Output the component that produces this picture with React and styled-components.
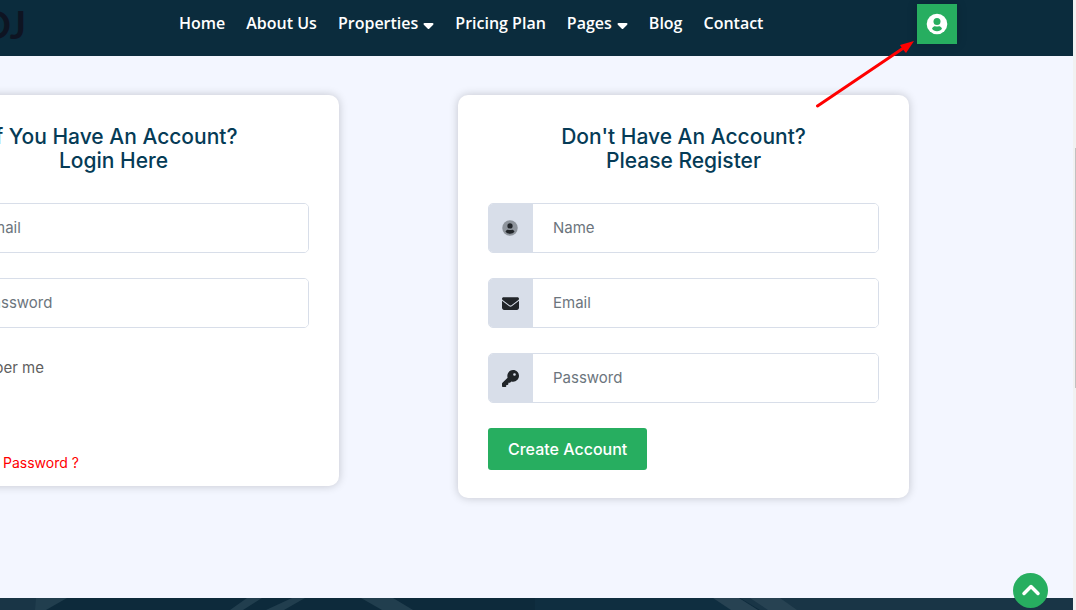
import React from "react";
import styled, { createGlobalStyle } from "styled-components";
import { FaEnvelope, FaKey, FaCaretDown } from "react-icons/fa6";

const GlobalStyle = createGlobalStyle`
  *, *::before, *::after { box-sizing: border-box; }
  body {
    margin: 0;
    background: #f3f6ff;
    font-family: Inter, "Liberation Sans", sans-serif;
    font-size: 15px;
    color: #606060;
    overflow: hidden;
  }
  button, input { font: inherit; }
  a { text-decoration: none; }
`;

const Shell = styled.div`
  display: flex;
  min-height: 100vh;
  overflow: hidden;
`;

const Page = styled.div`
  position: relative;
  flex: 1;
  min-width: 0;
  display: flex;
  flex-direction: column;
`;

const ScrollTrack = styled.div`
  flex: none;
  width: 3px;
  padding: 148px 0 0 2px;
  background: #f1f1f1;
`;

const ScrollThumb = styled.div`
  height: 240px;
  background: #c1c1c1;
`;

const Header = styled.header`
  display: flex;
  align-items: flex-start;
  height: 56px;
  padding-right: 116px;
  background: #0b2c3d;
`;

const Logo = styled.a`
  display: flex;
  flex: none;
  justify-content: flex-end;
  width: 26px;
  margin-right: 153px;
  font-family: Lato, sans-serif;
  font-size: 38px;
  font-weight: 700;
  line-height: 48px;
  color: #0e1422;
`;

const Nav = styled.nav`
  display: flex;
  flex: 1;
  gap: 21px;
`;

const NavLink = styled.a`
  display: flex;
  align-items: center;
  gap: 5px;
  font-family: "Open Sans", sans-serif;
  font-size: 16px;
  font-weight: 600;
  line-height: 46px;
  white-space: nowrap;
  color: #fff;

  svg {
    width: 11px;
    height: 16px;
    margin-top: 4px;
  }
`;

const AccountButton = styled.button`
  display: grid;
  place-items: center;
  flex: none;
  width: 40px;
  height: 40px;
  margin-top: 4px;
  padding: 0 1px 1px 0;
  border: 0;
  background: #27ae60;
  box-shadow: 0 0 10px rgba(0, 0, 0, 0.15);
  color: #fff;
`;

const Main = styled.main`
  flex: 1;
  display: grid;
  grid-template-columns: 1fr 1fr;
  gap: 119px;
  align-items: start;
  margin-left: -112px;
  padding: 39px 164px 100px 0;
`;

const Card = styled.section`
  padding: 30px 30px ${(p) => (p.$compact ? "11px" : "28px")};
  border-radius: 10px;
  background: #fff;
  box-shadow: 0 0 10px rgba(0, 0, 0, 0.2);
`;

const Title = styled.h2`
  margin: 0 0 30px;
  font-size: 21px;
  font-weight: 500;
  line-height: 24px;
  text-align: center;
  color: #053b56;
`;

const Form = styled.form`
  display: flex;
  flex-direction: column;
  align-items: flex-start;
  gap: 25px;
`;

const Field = styled.label`
  display: flex;
  align-self: stretch;
  height: 50px;
  border: 1px solid #d8dee9;
  border-radius: 5px;
  overflow: hidden;
`;

const FieldIcon = styled.span`
  display: grid;
  place-items: center;
  flex: none;
  width: 44px;
  padding-right: 2px;
  background: #d8dee9;
  color: #212529;
`;

const Input = styled.input`
  flex: 1;
  min-width: 0;
  padding: 0 20px 1px;
  border: 0;
  outline: 0;
  background: #fff;
  color: #212529;

  &::placeholder {
    color: #6c757d;
    opacity: 1;
  }
`;

const Remember = styled.label`
  display: flex;
  align-items: center;
  gap: 10px;
  height: 28px;

  input { width: 13px; height: 13px; margin: 0; }
`;

const SubmitButton = styled.button`
  height: 42px;
  padding: 0 20px;
  border: 0;
  border-radius: 3px;
  background: #27ae60;
  font-size: 16px;
  font-weight: 500;
  color: #fff;
`;

const LoginActions = styled.div`
  display: flex;
  flex-direction: column;
  align-items: flex-start;
  gap: 20px;
  margin-top: -17px;
`;

const ForgotLink = styled.a`
  padding-left: 4px;
  font-size: 14px;
  line-height: 24px;
  color: #f00;
`;

const Footer = styled.footer`
  height: 12px;
  background: #0d2a3b;

  svg { display: block; width: 100%; height: 12px; }
`;

const TopButton = styled.button`
  position: fixed;
  right: 28px;
  bottom: 2px;
  display: grid;
  place-items: center;
  width: 35px;
  height: 35px;
  padding: 0 0 2px;
  border: 0;
  border-radius: 50%;
  background: #27ae60;
`;

const Pointer = styled.svg`
  position: absolute;
  top: 38px;
  right: 157px;
  width: 100px;
  height: 72px;
  pointer-events: none;
`;

const NAV = [
  { label: "Home" },
  { label: "About Us" },
  { label: "Properties", menu: true },
  { label: "Pricing Plan" },
  { label: "Pages", menu: true },
  { label: "Blog" },
  { label: "Contact" },
];

const AccountIcon = () => (
  <svg width="24" height="24" viewBox="0 0 24 24" fill="currentColor" aria-hidden="true">
    <circle cx="12" cy="12" r="10.3" />
    <ellipse cx="12" cy="9.6" rx="3.5" ry="3.5" fill="#27ae60" />
    <path d="M7 16.400c.9-1.600 2.600-2.200 3.700-2 .9.200 1.700.2 2.600 0 1.100-.2 2.800.4 3.700 2-.9 1.700-2.700 2.800-5 2.800s-4.100-1.100-5-2.800z" fill="#27ae60" />
  </svg>
);

const PersonIcon = () => (
  <svg width="18" height="18" viewBox="0 0 24 24" aria-hidden="true">
    <circle cx="12" cy="12" r="10.300" fill="#212529" opacity="0.4" />
    <circle cx="12" cy="9.200" r="3.500" fill="#212529" />
    <path d="M6 16.800c.9-1.900 2.700-2.700 4-2.300 1.300.4 2.700.4 4 0 1.300-.4 3.100.4 4 2.300-1.300 1.900-3.500 3-6 3s-4.700-1.100-6-3z" fill="#212529" />
  </svg>
);

const FormField = ({ icon, label, type = "text" }) => (
  <Field>
    <FieldIcon>{icon}</FieldIcon>
    <Input type={type} placeholder={label} aria-label={label} />
  </Field>
);

export default function App() {
  return (
    <>
      <GlobalStyle />
      <Shell>
        <Page>
          <Header>
            <Logo href="#">OJ</Logo>
            <Nav>
              {NAV.map(({ label, menu }) => (
                <NavLink key={label} href="#">
                  {label}
                  {menu && <FaCaretDown aria-hidden="true" />}
                </NavLink>
              ))}
            </Nav>
            <AccountButton type="button" aria-label="Account">
              <AccountIcon />
            </AccountButton>
          </Header>

          <Main>
            <Card $compact>
              <Title>
                If You Have An Account?
                <br />
                Login Here
              </Title>
              <Form>
                <FormField icon={<FaEnvelope size={17} />} label="Email" type="email" />
                <FormField icon={<FaKey size={17} />} label="Password" type="password" />
                <Remember>
                  <input type="checkbox" />
                  Remember me
                </Remember>
                <LoginActions>
                  <SubmitButton type="button">Login</SubmitButton>
                  <ForgotLink href="#">Forgot Your Password ?</ForgotLink>
                </LoginActions>
              </Form>
            </Card>

            <Card>
              <Title>
                Don't Have An Account?
                <br />
                Please Register
              </Title>
              <Form>
                <FormField icon={<PersonIcon />} label="Name" />
                <FormField icon={<FaEnvelope size={17} />} label="Email" type="email" />
                <FormField icon={<FaKey size={17} />} label="Password" type="password" />
                <SubmitButton type="button">Create Account</SubmitButton>
              </Form>
            </Card>
          </Main>

          <Footer>
            <svg viewBox="0 0 1073 12" preserveAspectRatio="none" aria-hidden="true">
              <rect width="38" height="12" fill="#193546" />
              <path d="M36 0H67L46 12H35z" fill="#213e4e" />
              <path d="M247 0H262L243 12H230zM292 0H305L284 12H266z" fill="#213e4e" />
              <path d="M361 0H393L413 12H382z" fill="#213e4e" />
              <path d="M535 0H720L740 12H535z" fill="#0f2e40" />
              <path d="M740 0H1073V12H760z" fill="#193546" />
              <path d="M713 0H739L758 12H731zM750 0H780L797 12H768z" fill="#274252" />
            </svg>
          </Footer>

          <Pointer viewBox="0 0 100 72" aria-hidden="true">
            <path d="M1.500 68L86 11" stroke="#f00" strokeWidth="3" strokeLinecap="round" />
            <path d="M98 3L90 15L86.500 11L84 7z" fill="#f00" />
          </Pointer>
        </Page>
        <ScrollTrack>
          <ScrollThumb />
        </ScrollTrack>
      </Shell>
      <TopButton type="button" aria-label="Back to top">
        <svg width="20" height="14" viewBox="0 0 20 14" fill="none" aria-hidden="true">
          <path d="M3 10.500L10 3.500L17 10.500" stroke="#fff" strokeWidth="3.500" strokeLinecap="round" strokeLinejoin="round" />
        </svg>
      </TopButton>
    </>
  );
}
